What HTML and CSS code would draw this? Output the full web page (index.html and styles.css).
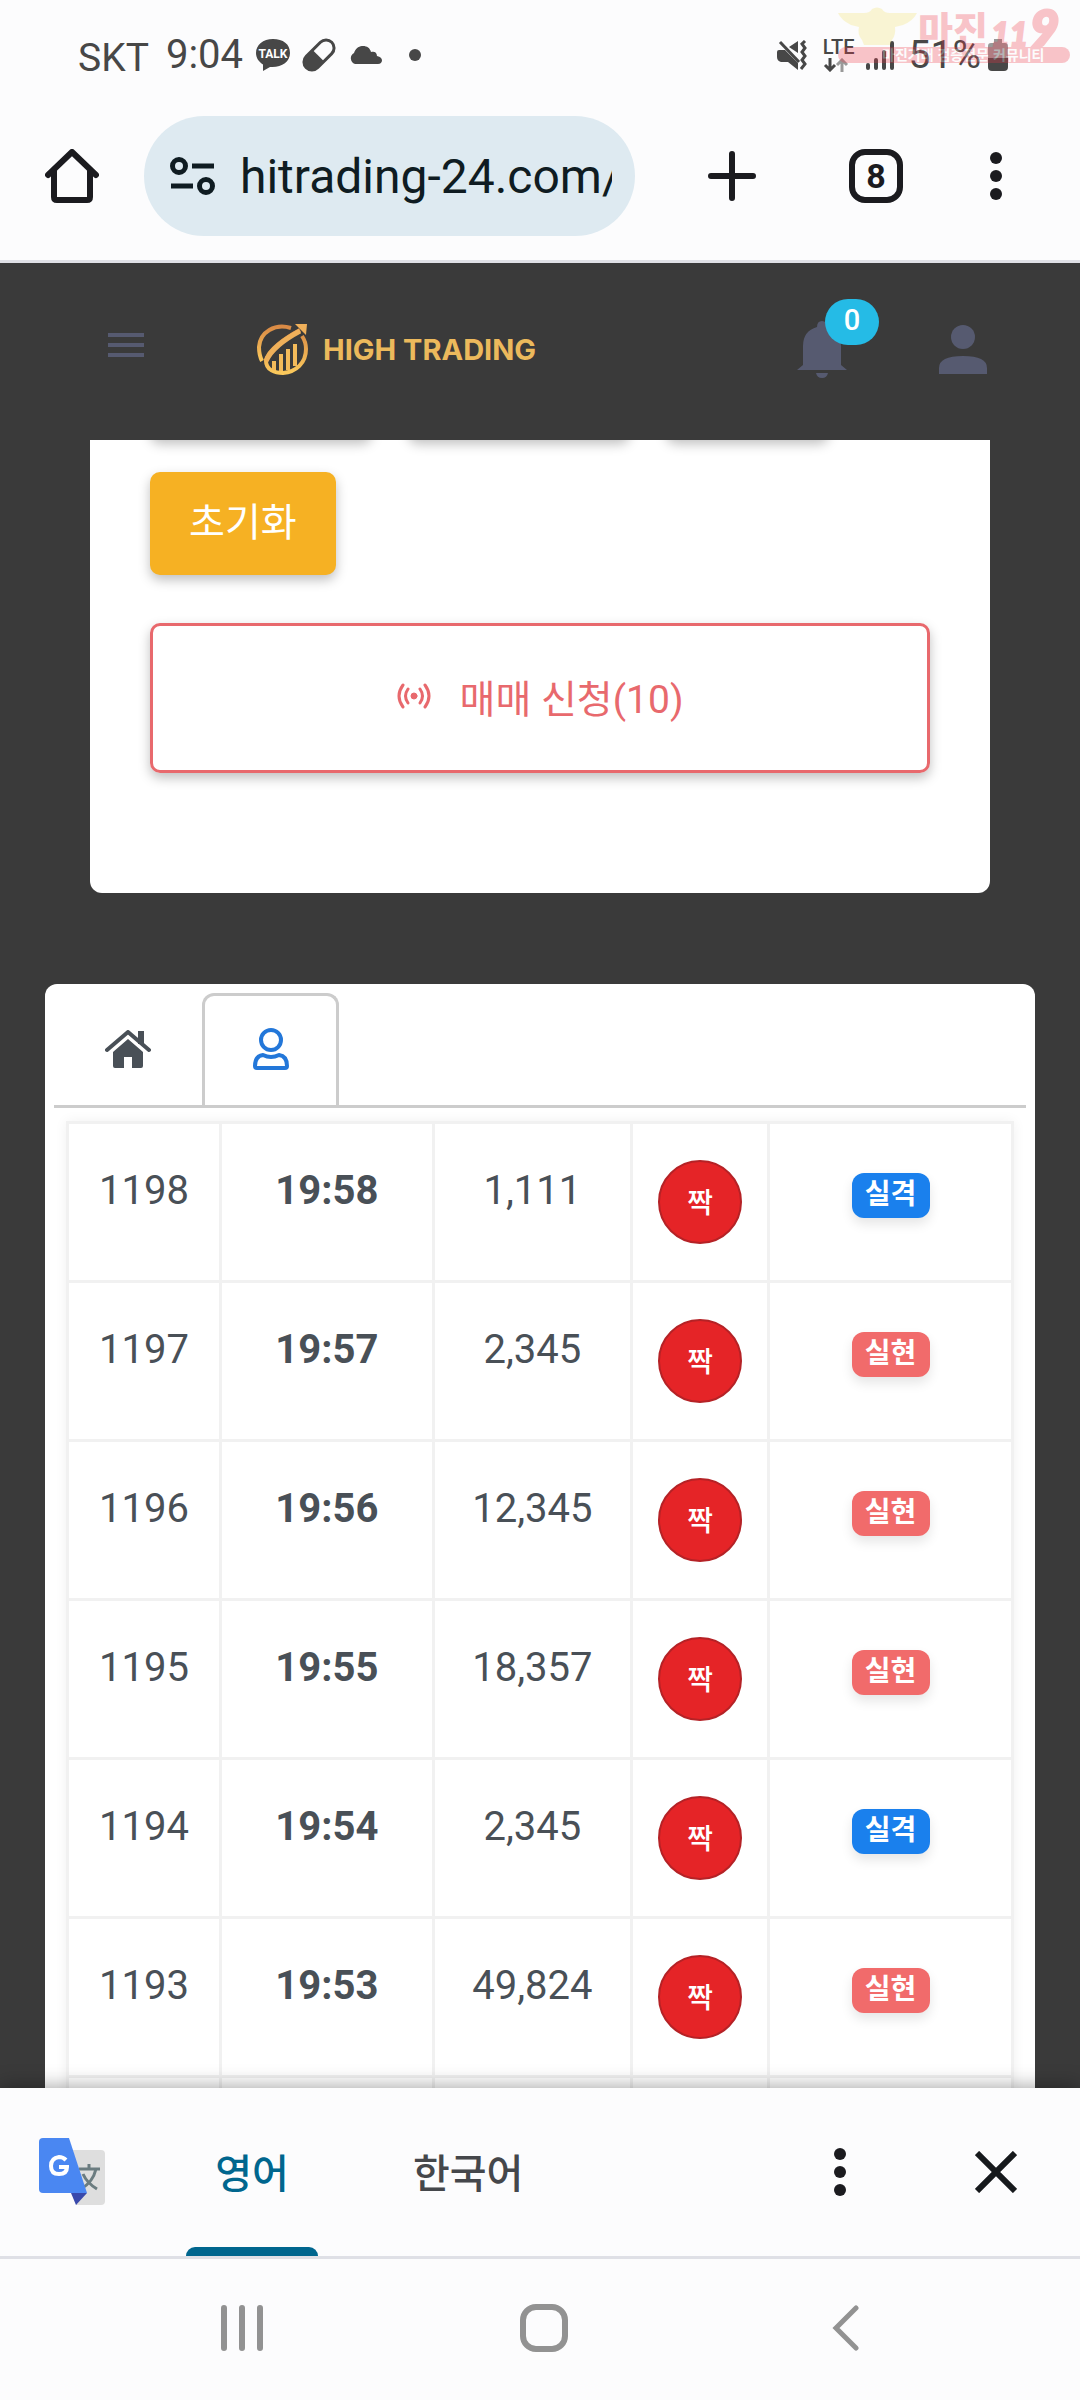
FILE: index.html
```html
<!DOCTYPE html>
<html lang="ko">
<head>
<meta charset="utf-8">
<meta name="viewport" content="width=device-width, initial-scale=1">
<title>High Trading</title>
<link rel="stylesheet" href="styles.css">
</head>
<body>
<div class="screen">
  <div class="statusbar">
    <div class="status-left">
      <span class="carrier">SKT</span>
      <span class="clock">9:04</span>
      <svg class="talk" width="34" height="32" viewBox="0 0 34 32"><path fill="#474747" d="M17 0C7 0 0 6 0 14c0 5 3 9 7 11.500L7 32l7-4c11 1 20-5 20-14S27 0 17 0z"/><text class="talk-label" x="17" y="19" text-anchor="middle">TALK</text></svg>
      <svg class="pill" width="32" height="32" viewBox="0 0 32 32"><g transform="rotate(45 16 16)"><rect x="8" y="-2" width="16" height="36" rx="8" fill="none" stroke="#474747" stroke-width="3"/><path fill="#474747" d="M8 17h16v9a8 8 0 0 1-16 0z"/></g></svg>
      <svg class="cloud" width="33" height="18" viewBox="0 0 33 18"><path fill="#474747" d="M6 18a6 6 0 0 1-1-11C7 1 11 0 14 0c4 0 7 2 8 6 3-1 6 0 6 4 7 1 6 8 1 8z"/></svg>
      <span class="dot"></span>
    </div>
    <div class="status-right">
      <svg class="mute" width="30" height="30" viewBox="0 0 30 30"><path fill="#474747" d="M0 12q0-2 2-2h6l13 13v7l-10-8H4q-4-1-4-5zM12 7l9-6v12z"/><path d="M3 2l19 20" stroke="#474747" stroke-width="3"/><path d="M28 1l-3 3 3 4-3 4 3 4-3 4 3 4-4 5" fill="none" stroke="#474747" stroke-width="3"/></svg>
      <span class="lte"><span>LTE</span>
        <svg width="26" height="14" viewBox="0 0 26 14" fill="none" stroke-width="3"><path stroke="#474747" d="M7 0v12M2 7l5 5 5-5"/><path stroke="#999" d="M19 14V2M14 7l5-5 5 5"/></svg></span>
      <svg class="signal" width="28" height="30" viewBox="0 0 28 30" stroke="#474747" stroke-width="4" stroke-linecap="round"><path d="M2 25v3M10 20v8M18 12v16M26 3v25"/></svg>
      <span class="battery-text">51%</span>
      <svg class="battery" width="20" height="32" viewBox="0 0 20 32"><path fill="#999" d="M6 0h8v4h3q3 0 3 3v12H0V7q0-3 3-3h3z"/><path fill="#474747" d="M0 19h20v9q0 4-4 4H4q-4 0-4-4z"/></svg>
    </div>
    <svg class="watermark" width="234" height="60" viewBox="0 0 234 60">
      <g fill="#f3e36b"><path d="M0 5h26q6 0 8-4 5-3 10 0 2 4 8 4h27q-4 8-14 12l-8 2q1 8-3 13l-2 5H26l-2-5q-5-6-3-13l-8-2Q3 12 0 5z"/></g>
      <g fill="#ee3344"><rect x="0" y="39" width="232" height="16" rx="8"/>
      <text class="wm-title" x="80" y="36">마진</text><text class="wm-small" x="153" y="38">11</text><text class="wm-nine" x="192" y="38">9</text></g>
      <text class="wm-sub" x="44" y="52">마진거래 검증전문 커뮤니티</text>
    </svg>
  </div>

  <div class="toolbar">
    <button class="icon-btn home-btn" aria-label="Home"><svg width="54" height="54" viewBox="0 0 54 54" fill="none" stroke="#1b1b1f" stroke-width="6" stroke-linecap="round" stroke-linejoin="round"><path d="M3 26L27 3l24 23M9 22v26q0 3 3 3h30q3 0 3-3V22"/></svg></button>
    <div class="omnibox">
      <svg width="45" height="39" viewBox="0 0 45 39" fill="none" stroke="#0f1c22" stroke-width="5"><circle cx="9" cy="9" r="6.500"/><path d="M22 9h22M1 29h22"/><circle cx="36" cy="29" r="6.500"/></svg>
      <input class="url" type="text" aria-label="Address" value="hitrading-24.com/">
    </div>
    <button class="icon-btn plus-btn" aria-label="New tab"><svg width="48" height="50" viewBox="0 0 48 50" stroke="#1b1b1f" stroke-width="6" stroke-linecap="round"><path d="M24 3v44M3 25h42"/></svg></button>
    <button class="tabs-btn" aria-label="Tabs">8</button>
    <button class="icon-btn more-btn" aria-label="More"><svg width="12" height="50" viewBox="0 0 12 50" fill="#1b1b1f"><circle cx="6" cy="7" r="6"/><circle cx="6" cy="25" r="6"/><circle cx="6" cy="43" r="6"/></svg></button>
  </div>

  <main class="page">
    <header class="site-header">
      <button class="icon-btn menu-btn" aria-label="Menu"><svg width="36" height="24" viewBox="0 0 36 24" fill="#565a70"><path d="M0 0h36v4H0zM0 10h36v4H0zM0 20h36v4H0z"/></svg></button>
      <a class="logo" href="#"><svg width="51" height="51" viewBox="0 0 51 51" fill="none">
        <defs><linearGradient id="gold" x1="0" y1="0" x2="0" y2="1"><stop offset="0" stop-color="#d98a45"/><stop offset="1" stop-color="#fbc95c"/></linearGradient></defs>
        <path d="M34 4C18-1 3 8 2 23q0 8 3 14" stroke="url(#gold)" stroke-width="4"/>
        <path d="M43 6C30 13 10 26 9 37c0 9 9 12 17 12 13-1 23-10 23-24q0-7-4-13" stroke="url(#gold)" stroke-width="4"/>
        <path d="M9 37C14 26 28 15 43 7" stroke="#efb05a" stroke-width="5"/>
        <path d="M38 0h12l-1 11z" fill="#efb05a"/>
        <path d="M17 46v-9M24 47V30M31 46V25M38 42V20" stroke="#f4bb5a" stroke-width="4"/></svg>
        <span>HIGH TRADING</span></a>
      <button class="icon-btn bell-btn" aria-label="Notifications"><svg width="50" height="58" viewBox="0 0 50 58" fill="#565a70"><path d="M25 0q5 0 5 6 14 4 14 19v19l6 5H0l6-5V25Q6 10 20 6q0-6 5-6zM19 52h12q-1 5-6 5t-6-5z"/></svg><span class="count">0</span></button>
      <button class="icon-btn user-btn" aria-label="Account"><svg width="49" height="50" viewBox="0 0 49 50" fill="#565a70"><circle cx="24" cy="12" r="12"/><path d="M0 49v-6q0-12 24-12t24 12v6z"/></svg></button>
    </header>

    <section class="order-card">
      <div class="button-edge"><span></span><span></span><span></span></div>
      <div class="order-body">
        <button class="reset">초기화</button>
        <button class="apply"><svg width="34" height="26" viewBox="0 0 34 26" fill="none" stroke="#e8696d" stroke-width="3" stroke-linecap="round"><circle cx="17" cy="13" r="3" fill="#e8696d" stroke-width="1"/><path d="M11 6q-5 7 0 14M23 6q5 7 0 14M6 2q-8 11 0 22M28 2q8 11 0 22"/></svg><span>매매 신청(10)</span></button>
      </div>
    </section>

    <section class="history-card">
      <nav class="tabs">
        <a class="tab" href="#" aria-label="All"><svg width="46" height="38" viewBox="0 0 46 38" fill="#495057"><path d="M8 22L23 9l15 13v14q0 2-2 2h-9V27h-8v11h-9q-2 0-2-2z"/><path d="M33 1h6v13h-6z"/><path d="M2 20L23 2l21 18" fill="none" stroke="#495057" stroke-width="4" stroke-linecap="round" stroke-linejoin="round"/></svg></a>
        <a class="tab active" href="#" aria-label="Mine"><svg width="36" height="42" viewBox="0 0 36 42" fill="none" stroke="#2377d9" stroke-width="4" stroke-linejoin="round"><circle cx="18" cy="12" r="10"/><path d="M10 27q8 4 16 0 8 1 8 11 0 2-2 2H4q-2 0-2-2 0-10 8-11z"/></svg></a>
      </nav>
      <div class="table-wrap">
      <table class="history">
        <colgroup><col class="c-no"><col class="c-time"><col class="c-amt"><col class="c-pick"><col class="c-state"></colgroup>
        <tbody>
        <tr><td>1198</td><td class="time">19:58</td><td>1,111</td><td><span class="pick">짝</span></td><td><span class="badge blue">실격</span></td></tr>
        <tr><td>1197</td><td class="time">19:57</td><td>2,345</td><td><span class="pick">짝</span></td><td><span class="badge red">실현</span></td></tr>
        <tr><td>1196</td><td class="time">19:56</td><td>12,345</td><td><span class="pick">짝</span></td><td><span class="badge red">실현</span></td></tr>
        <tr><td>1195</td><td class="time">19:55</td><td>18,357</td><td><span class="pick">짝</span></td><td><span class="badge red">실현</span></td></tr>
        <tr><td>1194</td><td class="time">19:54</td><td>2,345</td><td><span class="pick">짝</span></td><td><span class="badge blue">실격</span></td></tr>
        <tr><td>1193</td><td class="time">19:53</td><td>49,824</td><td><span class="pick">짝</span></td><td><span class="badge red">실현</span></td></tr>
        <tr><td></td><td></td><td></td><td></td><td></td></tr>
        </tbody>
      </table>
      </div>
    </section>
  </main>

  <div class="translate">
    <svg class="gt" width="67" height="68" viewBox="0 0 67 68"><path fill="#dedede" d="M34 12h28q4 0 4 4v47q0 4-4 4H37z"/><path fill="#3949ab" d="M32 55h16L37 67z"/><path d="M40 31h21M50 26v5M57 31q-3 13-15 20M44 36q4 9 14 15" stroke="#6b7c80" stroke-width="3" fill="none"/><path fill="#4a87f2" d="M4 0h26l18 55H4q-4 0-4-4V4q0-4 4-4z"/><path d="M27 22q-3-3-7-3-8 1-8 9t8 8q8 0 8-7h-8" stroke="#fff" stroke-width="4" fill="none"/></svg>
    <button class="lang active">영어</button>
    <button class="lang">한국어</button>
    <button class="icon-btn tmore-btn" aria-label="Options"><svg width="12" height="50" viewBox="0 0 12 50" fill="#1b1b1f"><circle cx="6" cy="7" r="6"/><circle cx="6" cy="25" r="6"/><circle cx="6" cy="43" r="6"/></svg></button>
    <button class="icon-btn close-btn" aria-label="Close"><svg width="42" height="42" viewBox="0 0 42 42" stroke="#16191c" stroke-width="6"><path d="M2 2l38 38M40 2L2 40"/></svg></button>
  </div>
  <div class="navbar">
    <button class="icon-btn" aria-label="Recents"><svg width="42" height="46" viewBox="0 0 42 46" stroke="#929292" stroke-width="6" stroke-linecap="round"><path d="M3 3v40M21 3v40M39 3v40"/></svg></button>
    <button class="icon-btn" aria-label="Home screen"><svg width="48" height="48" viewBox="0 0 48 48" fill="none" stroke="#929292" stroke-width="6"><rect x="3" y="3" width="42" height="42" rx="13"/></svg></button>
    <button class="icon-btn" aria-label="Back"><svg width="35" height="46" viewBox="-8 0 35 46" fill="none" stroke="#929292" stroke-width="5" stroke-linecap="round"><path d="M24 3L4 23l20 20"/></svg></button>
  </div>
</div>
</body>
</html>
```
FILE: styles.css
```css
* { box-sizing: border-box; }
body {
  margin: 0;
  font-family: Roboto, "Noto Sans CJK KR", sans-serif;
  background: #fcfcfd;
}
button { font-family: inherit; margin: 0; padding: 0; border: 0; background: none; }
svg { display: block; flex: none; }
.screen { display: flex; flex-direction: column; height: 100vh; overflow: hidden; }
.icon-btn { display: block; position: relative; flex: none; }

/* status bar */
.statusbar {
  position: relative;
  display: flex;
  justify-content: space-between;
  height: 110px;
  flex: none;
  padding: 0 72px 0 78px;
  color: #474747;
  font-size: 40px;
  line-height: 110px;
}
.status-left, .status-right { display: flex; align-items: center; }
.carrier { padding-top: 5px; font-size: 39px; }
.clock { margin-left: 17px; }
.talk { margin-left: 13px; }
.talk-label { font: 700 12px Roboto, sans-serif; fill: #fff; }
.pill { margin-left: 13px; overflow: visible; }
.cloud { margin-left: 14px; }
.dot { width: 12px; height: 12px; margin-left: 27px; border-radius: 50%; background: #474747; }
.lte { display: flex; flex-direction: column; gap: 2px; margin-left: 16px; font-size: 20px; font-weight: 500; line-height: 17px; }
.signal { margin-left: 11px; }
.battery-text { margin-left: 15px; font-size: 39px; }
.battery { margin-left: 7px; }
.watermark { position: absolute; top: 8px; right: 8px; overflow: visible; opacity: .28; }
.wm-title { font: 900 38px "Noto Sans CJK KR", sans-serif; }
.wm-small { font: italic 900 32px Lato, sans-serif; stroke: #ee3344; stroke-width: 2px; }
.wm-nine { font: italic 900 50px Lato, sans-serif; stroke: #ee3344; stroke-width: 3px; }
.wm-sub { font: 700 14px "Noto Sans CJK KR", sans-serif; fill: #fff; }

/* browser toolbar */
.toolbar {
  display: flex;
  align-items: center;
  flex: none;
  height: 153px;
  padding: 0 78px 18px 45px;
  border-bottom: 3px solid #dfe0e6;
}
.omnibox {
  display: flex;
  flex: 1;
  min-width: 0;
  align-items: center;
  gap: 25px;
  height: 120px;
  margin-left: 45px;
  padding: 0 23px 0 26px;
  border-radius: 60px;
  background: #deeaf1;
}
.url {
  flex: 1;
  min-width: 0;
  padding: 0;
  border: 0;
  background: none;
  font: 48px Roboto, sans-serif;
  color: #0f1c22;
  outline: 0;
}
.plus-btn { margin-left: 73px; }
.tabs-btn {
  width: 54px;
  height: 54px;
  margin-left: 93px;
  border: 6px solid #1b1b1f;
  border-radius: 16px;
  color: #1b1b1f;
  font-size: 34px;
  font-weight: 700;
  line-height: 42px;
}
.more-btn { margin-left: 87px; }

/* page */
.page { flex: 1; min-height: 0; overflow: hidden; background: #3a3a3a; }
.site-header {
  display: flex;
  align-items: center;
  height: 177px;
  padding: 0 92px 4px 108px;
}
.menu-btn { padding-bottom: 10px; }
.logo {
  display: flex;
  align-items: center;
  gap: 15px;
  margin: 0 auto 0 113px;
  color: #ecb95c;
  font: 700 29px Inter, sans-serif;
  text-decoration: none;
}
.count {
  position: absolute;
  top: -22px;
  left: 28px;
  width: 54px;
  height: 46px;
  border-radius: 23px;
  background: #25bbe6;
  color: #fff;
  font-size: 29px;
  font-weight: 500;
  line-height: 43px;
}
.user-btn { margin-left: 92px; }

.order-card {
  margin: 0 90px 91px;
  border-radius: 0 0 12px 12px;
  background: #fff;
  overflow: hidden;
}
.button-edge { display: flex; gap: 36px; height: 32px; padding-left: 60px; overflow: hidden; }
.button-edge span { width: 222px; height: 20px; margin-top: -20px; border-radius: 10px; box-shadow: 0 4px 12px rgba(0, 0, 0, .25); }
.button-edge span:last-child { width: 163px; }
.order-body { padding: 0 60px 120px; }
.reset {
  display: block;
  padding: 0 39px;
  border-radius: 10px;
  background: #f6b123;
  box-shadow: 0 5px 12px rgba(0, 0, 0, .25);
  color: #fff;
  font-size: 39px;
  line-height: 103px;
}
.apply {
  display: flex;
  align-items: center;
  justify-content: center;
  gap: 29px;
  width: 100%;
  height: 150px;
  margin-top: 48px;
  padding-bottom: 4px;
  border: 3px solid #e8696d;
  border-radius: 10px;
  box-shadow: 0 5px 12px rgba(0, 0, 0, .25);
  color: #e8696d;
  font-size: 39px;
}

.history-card { margin: 0 45px; padding: 9px 9px 0; border-radius: 12px 12px 0 0; background: #fff; }
.tabs { display: flex; height: 115px; border-bottom: 3px solid #ccc; }
.tab {
  display: flex;
  align-items: center;
  justify-content: center;
  width: 137px;
  height: 112px;
  padding-bottom: 4px;
  border: 3px solid transparent;
  border-bottom: 0;
  border-radius: 12px 12px 0 0;
}
.tab:first-child { width: 148px; }
.tab.active { border-color: #ccc; }
.table-wrap { padding: 13px 12px 0; }
.history {
  width: 100%;
  border-collapse: collapse;
  table-layout: fixed;
  box-shadow: 0 0 12px rgba(0, 0, 0, .06);
  color: #495057;
  font-size: 40px;
  line-height: 62px;
  text-align: center;
}
.c-no { width: 16.2%; }
.c-time { width: 22.5%; }
.c-amt { width: 21%; }
.c-pick { width: 14.5%; }
.c-state { width: 25.8%; }
.history td { height: 159px; padding: 36px 0; border: 3px solid #f1f1f1; vertical-align: top; }
.time { font-weight: 700; }
.pick {
  display: block;
  width: 84px;
  height: 84px;
  margin: 0 auto;
  border: 2px solid #b52226;
  border-radius: 50%;
  background: #e52427;
  color: #fff;
  font-size: 28px;
  font-weight: 500;
  line-height: 84px;
}
.badge {
  display: block;
  width: 78px;
  height: 45px;
  margin: 13px auto 0;
  border-radius: 12px;
  box-shadow: 0 6px 12px rgba(0, 0, 0, .1);
  color: #fff;
  font-size: 28px;
  font-weight: 700;
  line-height: 43px;
}
.blue { background: #1a80ed; }
.red { background: #f16b6b; }

/* translate bar */
.translate {
  position: relative;
  display: flex;
  align-items: center;
  flex: none;
  height: 171px;
  padding: 0 63px 0 39px;
  border-bottom: 3px solid #dfe0e6;
  background: #fcfcfd;
  box-shadow: 0 0 20px rgba(0, 0, 0, .4);
}
.lang {
  height: 168px;
  padding: 0 30px 2px;
  color: #45474b;
  font-size: 40px;
  font-weight: 500;
  white-space: nowrap;
}
.lang.active {
  position: relative;
  width: 132px;
  margin-left: 80px;
  margin-right: 65px;
  padding: 0 0 2px;
  color: #00668e;
}
.lang.active::after {
  content: "";
  position: absolute;
  left: 0;
  right: 0;
  bottom: 0;
  height: 9px;
  border-radius: 9px 9px 0 0;
  background: #00668e;
}
.tmore-btn { margin-left: auto; }
.close-btn { margin-left: 129px; }

.navbar {
  position: relative;
  display: flex;
  align-items: center;
  justify-content: space-between;
  flex: none;
  height: 141px;
  padding: 0 221px 4px;
  background: #fcfcfd;
}
```
